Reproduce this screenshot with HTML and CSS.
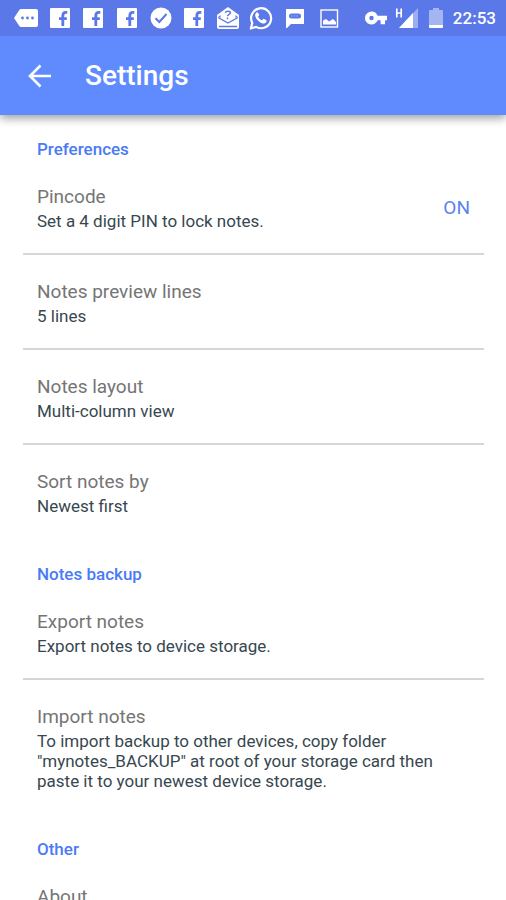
FILE: index.html
```html
<!DOCTYPE html>
<html lang="en">
<head>
<meta charset="utf-8">
<meta name="viewport" content="width=device-width, initial-scale=1">
<title>Settings</title>
<link rel="stylesheet" href="styles.css">
</head>
<body>
<svg class="sprite" aria-hidden="true">
  <symbol id="facebook" viewBox="0 0 24 24">
    <rect x="2" y="2" width="20" height="20" rx="1" fill="currentColor"/>
    <path fill="none" stroke="#5a78e8" stroke-width="2.800" d="M14.800 20V10q0-3.600 3-3.600h1.500M11 12.600h7.800"/>
  </symbol>
</svg>
<div class="app">
  <div class="status">
    <div class="notifications">
      <svg class="icon" viewBox="0 0 24 24"><path fill="currentColor" d="M7 3h15q2 0 2 2v14q0 2-2 2H7q-1 0-1.700-1L0 12l5.300-8Q6 3 7 3z"/><g class="cut"><circle cx="8.500" cy="12" r="1.400"/><circle cx="13.500" cy="12" r="1.400"/><circle cx="18.500" cy="12" r="1.400"/></g></svg>
      <svg class="icon"><use href="#facebook"/></svg>
      <svg class="icon"><use href="#facebook"/></svg>
      <svg class="icon"><use href="#facebook"/></svg>
      <svg class="icon" viewBox="0 0 24 24"><circle cx="12" cy="12" r="10.500" fill="currentColor"/><path class="cut-line" d="M6.500 12.200l3.800 3.800 7.200-8"/></svg>
      <svg class="icon"><use href="#facebook"/></svg>
      <svg class="icon" viewBox="0 0 24 24"><path fill="currentColor" d="M12 1l11 8v12q0 2-2 2H3q-2 0-2-2V9z"/><path class="cut" d="M2.500 10.500L4.500 9v3.200zM21.500 10.500L19.500 9v3.200z"/><path class="cut-thin" d="M2 11.500l10 5.500 10-5.500M3 20.500h18"/><path class="cut-thin" d="M9.300 6.800q.3-1.500 2.700-1.500 2.400 0 2.400 1.600c0 1.500-2.900 1.500-2.900 3.300M11.500 11.600v1.600"/></svg>
      <svg class="icon" viewBox="0 0 24 24"><path fill="none" stroke="currentColor" stroke-width="2.200" stroke-linejoin="round" d="M1.800 22.500l1.500-5.600A10 10 0 1 1 7.200 20.900z"/><path fill="currentColor" d="M8.600 6.500c-.5-.5-1-.4-1.500.2-2.500 3 .4 7 3.600 9.300 2.800 2 5.500 2.200 6.700-.2.500-1 .3-1.500-.4-1.900l-1.900-1c-.5-.2-.8-.1-1.200.4l-.8 1c-.5.400-3.900-2.200-4-3.700l1-1.300c.2-.4 0-.8-.2-1.200z"/></svg>
      <svg class="icon" viewBox="0 0 24 24"><path fill="currentColor" d="M3 3h18v15H8l-4 4H3z"/><rect class="cut" x="6" y="7.500" width="12" height="5" rx="2.500"/><path stroke="currentColor" stroke-width="1" opacity=".4" stroke-dasharray="1.600 1" d="M8 10h8"/></svg>
      <svg class="icon" viewBox="0 0 24 24"><rect x="4" y="4" width="16.500" height="17" fill="none" stroke="currentColor" stroke-width="1.400"/><path fill="currentColor" d="M6 18.500v-4l3-1.500 3 2.500 4-2.500 3 3v2.500z"/></svg>
    </div>
    <div class="system">
      <svg class="icon" viewBox="0 0 24 24"><path fill="currentColor" fill-rule="evenodd" d="M7.500 5.500a6.500 6.500 0 0 1 6.100 4.300H23v4.400h-2v4h-4.400v-4h-3A6.500 6.500 0 1 1 7.500 5.500zm0 4.300a2.200 2.200 0 1 0 0 4.400 2.200 2.200 0 0 0 0-4.400z"/></svg>
      <svg class="icon" viewBox="0 0 24 24"><path fill="currentColor" opacity=".4" d="M23 2v20H4z"/><path fill="currentColor" d="M18 7v15H4z"/><path fill="none" stroke="currentColor" stroke-width="1.700" d="M1.800 2.500v9M6.200 2.500v9M1.800 7h4.400"/></svg>
      <svg class="battery" viewBox="0 0 14 24"><path fill="currentColor" opacity=".45" d="M4 2h6v2h3q1 0 1 1v14H0V5q0-1 1-1h3z"/><path fill="currentColor" d="M0 19h14v2q0 1-1 1H1q-1 0-1-1z"/></svg>
      <time class="clock">22:53</time>
    </div>
  </div>
  <header class="bar">
    <button class="back" aria-label="Back"><svg viewBox="0 0 24 24"><path d="M23 12H2M12.500 1.500L2 12l10.500 10.500"/></svg></button>
    <h1>Settings</h1>
  </header>
  <main class="content">
    <section>
      <h2>Preferences</h2>
      <ul>
        <li><button class="row"><span class="text"><span class="title">Pincode</span><span class="summary">Set a 4 digit PIN to lock notes.</span></span><span class="state">ON</span></button></li>
        <li><button class="row"><span class="text"><span class="title">Notes preview lines</span><span class="summary">5 lines</span></span></button></li>
        <li><button class="row"><span class="text"><span class="title">Notes layout</span><span class="summary">Multi-column view</span></span></button></li>
        <li><button class="row"><span class="text"><span class="title">Sort notes by</span><span class="summary">Newest first</span></span></button></li>
      </ul>
    </section>
    <section>
      <h2>Notes backup</h2>
      <ul>
        <li><button class="row"><span class="text"><span class="title">Export notes</span><span class="summary">Export notes to device storage.</span></span></button></li>
        <li><button class="row"><span class="text"><span class="title">Import notes</span><span class="summary">To import backup to other devices, copy folder "mynotes_BACKUP" at root of your storage card then paste it to your newest device storage.</span></span></button></li>
      </ul>
    </section>
    <section>
      <h2>Other</h2>
      <ul>
        <li><button class="row"><span class="text"><span class="title">About</span></span></button></li>
      </ul>
    </section>
  </main>
</div>
</body>
</html>
```
FILE: styles.css
```css
* {
  box-sizing: border-box;
}

body {
  margin: 0;
  background: #fff;
  font-family: Roboto, "Liberation Sans", sans-serif;
}

.sprite {
  display: none;
}

.app {
  display: flex;
  flex-direction: column;
  height: 100vh;
}

.status {
  display: flex;
  flex: none;
  align-items: center;
  gap: 23px;
  height: 36px;
  padding: 0 10px 0 14px;
  background: #5a78e8;
  color: #fff;
}

.notifications {
  display: flex;
  flex: 1;
  justify-content: space-between;
}

.system {
  display: flex;
  align-items: center;
  gap: 10px;
}

.icon {
  display: block;
  width: 24px;
  height: 24px;
}

.battery {
  display: block;
  width: 14px;
  height: 24px;
}

.system .icon + .icon {
  margin-left: -3px;
}

.cut {
  fill: #5a78e8;
}

.cut-line,
.cut-thin {
  fill: none;
  stroke: #5a78e8;
  stroke-width: 2;
}

.cut-thin {
  stroke-width: 1.4;
}

.clock {
  font-size: 17px;
  font-weight: 500;
  line-height: 24px;
}

.bar {
  display: flex;
  flex: none;
  align-items: center;
  gap: 33px;
  height: 79px;
  padding: 0 28px;
  background: #5f8bff;
  color: #fff;
  box-shadow: 0 3px 9px rgba(0, 0, 0, 0.4);
  clip-path: inset(0 0 -16px);
  z-index: 1;
}

.back {
  padding: 0;
  border: 0;
  background: none;
  color: inherit;
}

.back svg {
  display: block;
  width: 24px;
  height: 24px;
  fill: none;
  stroke: currentColor;
  stroke-width: 2.6;
}

h1 {
  margin: 0;
  font-size: 28px;
  font-weight: 500;
  line-height: 32px;
}

.content {
  flex: 1;
  min-height: 0;
  overflow-y: auto;
  scrollbar-width: none;
  padding: 0 22px 0 23px;
}

h2 {
  margin: 0;
  padding: 24px 14px 1px;
  color: #4a7bf7;
  font-size: 17px;
  font-weight: 500;
  line-height: 20px;
}

ul {
  margin: 0;
  padding: 0;
  list-style: none;
}

li {
  border-bottom: 2px solid #d6d6d6;
}

li:last-child {
  border-color: transparent;
}

.row {
  display: flex;
  align-items: center;
  gap: 16px;
  width: 100%;
  padding: 25px 14px 22px;
  border: 0;
  background: none;
  font: inherit;
  text-align: left;
}

.text {
  display: flex;
  flex: 1;
  flex-direction: column;
  gap: 2px;
}

.title {
  color: #757575;
  font-size: 19px;
  line-height: 24px;
}

.summary {
  color: #37474f;
  font-size: 17px;
  line-height: 20px;
}

.state {
  color: #5b82ec;
  font-size: 19px;
  line-height: 24px;
}
```
